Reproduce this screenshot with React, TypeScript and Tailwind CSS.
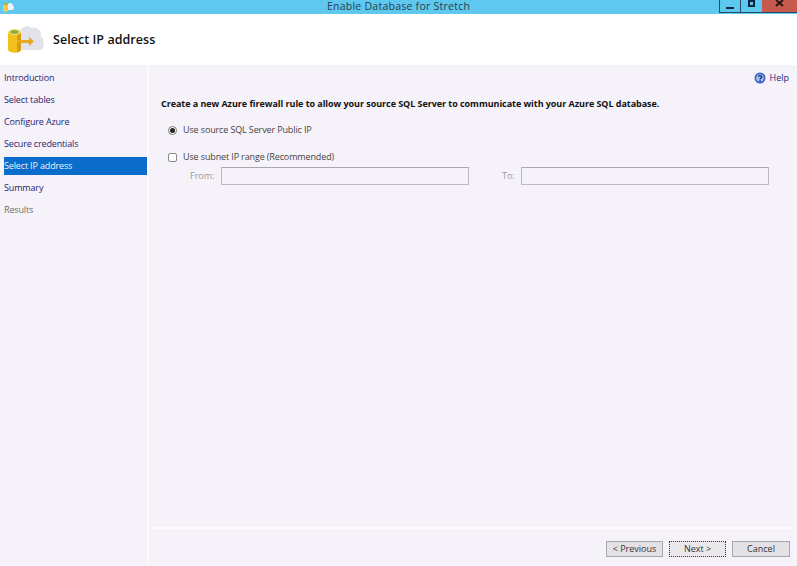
import React from "react";

const steps = [
  { label: "Introduction", state: "link" },
  { label: "Select tables", state: "link" },
  { label: "Configure Azure", state: "link" },
  { label: "Secure credentials", state: "link" },
  { label: "Select IP address", state: "active" },
  { label: "Summary", state: "link" },
  { label: "Results", state: "off" },
];

function DbIcon() {
  return (
    <svg width="40" height="36" viewBox="0 0 40 36">
      <path d="M12 28c-5 0-6-7-2-10-1-10 9-17 15-12 5-2 10 3 9 9 4 1 4 13-1 13z" fill="#e2e3ea" />
      <path d="M1 10h13v18c-2 3.500-11 3.500-13 0z" fill="#f2c11d" />
      <path d="M10 10h4v18c-1 1.500-2.500 2.200-4 2.500z" fill="#d89c12" />
      <ellipse cx="7.500" cy="10" rx="6.500" ry="3" fill="#f7e07a" />
      <ellipse cx="7.500" cy="10" rx="4.300" ry="1.900" fill="#8fae3c" />
      <path d="M10 18h12v-3l5 4.500-5 4.500v-3H10z" fill="#e8a81c" />
    </svg>
  );
}

function TitleIcon() {
  return (
    <svg width="14" height="14" viewBox="0 0 14 14">
      <path d="M4 8c-2-2 0-5 3-4 2-2 5-1 5 2 2 1 1 4-1 4H5z" fill="#eef0f4" />
      <path d="M2 4h5v7c-1 1-4 1-5 0z" fill="#f2c94c" />
      <ellipse cx="4.500" cy="4" rx="2.500" ry="1.200" fill="#9fb84a" />
    </svg>
  );
}

function HelpIcon() {
  return (
    <svg width="12" height="12" viewBox="0 0 12 12">
      <circle cx="6" cy="6" r="5.500" fill="#3b63c9" />
      <circle cx="6" cy="6" r="3.800" fill="#a9c1ee" />
      <path d="M4.300 4.700C4.600 3.400 7.800 3.300 7.800 5 7.800 6.200 6 6 6 7.400" fill="none" stroke="#12307f" strokeWidth="1.300" />
      <rect x="5.300" y="8.300" width="1.500" height="1.500" fill="#12307f" />
    </svg>
  );
}

function CloseIcon() {
  return (
    <svg width="9" height="7" viewBox="0 0 9 7">
      <path d="M1 0l7 6M8 0L1 6" fill="none" stroke="#2a1416" strokeWidth="2" />
    </svg>
  );
}

function WizButton({ children, className }: { children: React.ReactNode; className: string }) {
  return (
    <button className={"h-[16px] flex items-center justify-center text-[9px] text-[#333] border " + className}>
      {children}
    </button>
  );
}

export default function App() {
  return (
    <div
      className="w-[797px] h-[566px] overflow-hidden flex flex-col bg-[#f6f2f9] text-[#222]"
      style={{ fontFamily: '"Open Sans", "Noto Sans", sans-serif' }}
    >
      {/* title bar */}
      <div className="h-[14px] bg-[#5fc8ee] grid grid-cols-[1fr_auto_1fr] items-start shrink-0">
        <div className="pl-[1px]">
          <TitleIcon />
        </div>
        <div className="text-[10.500px] leading-[13px] text-[#26404f] tracking-[0.25px]">Enable Database for Stretch</div>
        <div className="flex justify-end">
          <div className="flex h-[13px] border-l border-b border-[#2b4a63]">
            <div className="w-[21px] flex items-center justify-center border-r border-[#2b4a63]">
              <div className="w-[8px] h-[2px] mt-[3px] bg-[#0e2740]" />
            </div>
            <div className="w-[21px] flex items-start justify-center">
              <div className="w-[7px] h-[7px] border-2 border-[#0e2740]" />
            </div>
            <div className="w-[35px] bg-[#c75a4e] flex items-start justify-center">
              <CloseIcon />
            </div>
          </div>
        </div>
      </div>

      {/* header */}
      <div className="h-[51px] bg-white flex items-center shrink-0 pl-[7px] gap-[6px]">
        <DbIcon />
        <div className="pt-[2px] text-[12.500px] tracking-[0.05px] text-[#111] font-semibold">Select IP address</div>
      </div>

      <div className="flex-1 flex min-h-0">
        {/* steps */}
        <div className="w-[149px] border-r-2 border-[#fbf9fc] pt-[2px] shrink-0">
          {steps.map((s) => (
            <div
              key={s.label}
              className={
                "h-[22px] flex items-center pl-[4px] text-[9px] tracking-[-0.15px] " +
                (s.state === "active"
                  ? "bg-[#0a6ccb] text-[#e8f2fb] bg-clip-content py-[2px]"
                  : s.state === "link"
                  ? "text-[#24246e]"
                  : "text-[#6e6e6e]")
              }
            >
              {s.label}
            </div>
          ))}
        </div>

        {/* page */}
        <div className="flex-1 flex flex-col min-w-0">
          <div className="flex-1 pl-[12px] pr-[28px]">
            <div className="flex justify-end items-center gap-[4px] -mr-[20px] h-[26px] text-[9px] text-[#2a2a7a]">
              <HelpIcon />
              <span>Help</span>
            </div>
            <div className="mt-[7px] text-[9px] tracking-[-0.055px] font-bold text-[#111] leading-[12px]">
              Create a new Azure firewall rule to allow your source SQL Server to communicate with your Azure SQL database.
            </div>
            <div className="mt-[14px] pl-[7px] flex items-center gap-[6px] text-[9px] tracking-[-0.13px] text-[#444] h-[12px]">
              <span className="w-[9px] h-[9px] rounded-full border border-[#777] bg-white flex items-center justify-center">
                <span className="w-[5px] h-[5px] rounded-full bg-[#222]" />
              </span>
              Use source SQL Server Public IP
            </div>
            <div className="mt-[15px] pl-[7px] flex items-center gap-[6px] text-[9px] tracking-[-0.13px] text-[#444] h-[12px]">
              <span className="w-[9px] h-[9px] rounded-[2px] border border-[#888] bg-white" />
              Use subnet IP range (Recommended)
            </div>
            <div className="mt-[4px] flex items-center text-[9px] text-[#9a9a9a]">
              <span className="w-[60px] pl-[29px]">From:</span>
              <div className="w-[248px] h-[18px] border border-[#bdbbc0] border-t-[#aaa8ad]" />
              <span className="w-[52px] pl-[33px]">To:</span>
              <div className="w-[248px] h-[18px] border border-[#bdbbc0] border-t-[#aaa8ad]" />
            </div>
          </div>

          {/* footer */}
          <div className="h-[39px] border-t-2 border-[#fbf9fc] flex justify-end items-start pt-[12px] pr-[7px] gap-[6px] shrink-0">
            <WizButton className="w-[57px] bg-[#e4e1e6] border-[#a9a9a9]">&lt; Previous</WizButton>
            <WizButton className="w-[57px] bg-[#ebe8ec] border-dotted border-[#16386b]">Next &gt;</WizButton>
            <WizButton className="w-[58px] bg-[#e4e1e6] border-[#a9a9a9]">Cancel</WizButton>
          </div>
        </div>
      </div>
    </div>
  );
}
